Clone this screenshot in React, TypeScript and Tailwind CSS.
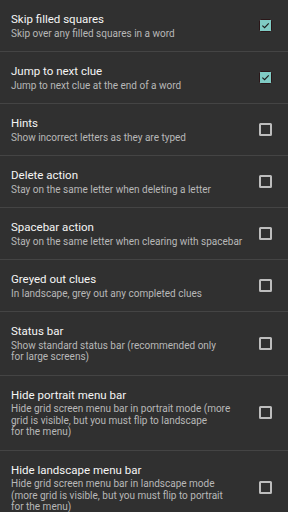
import React from 'react';

type Pref = {
    title: string;
    summary: string[];
    checked: boolean;
};

const PREFS: Pref[] = [
    { title: 'Skip filled squares', summary: ['Skip over any filled squares in a word'], checked: true },
    { title: 'Jump to next clue', summary: ['Jump to next clue at the end of a word'], checked: true },
    { title: 'Hints', summary: ['Show incorrect letters as they are typed'], checked: false },
    { title: 'Delete action', summary: ['Stay on the same letter when deleting a letter'], checked: false },
    { title: 'Spacebar action', summary: ['Stay on the same letter when clearing with spacebar'], checked: false },
    { title: 'Greyed out clues', summary: ['In landscape, grey out any completed clues'], checked: false },
    {
        title: 'Status bar',
        summary: ['Show standard status bar (recommended only', 'for large screens)'],
        checked: false,
    },
    {
        title: 'Hide portrait menu bar',
        summary: [
            'Hide grid screen menu bar in portrait mode (more',
            'grid is visible, but you must flip to landscape',
            'for the menu)',
        ],
        checked: false,
    },
    {
        title: 'Hide landscape menu bar',
        summary: [
            'Hide grid screen menu bar in landscape mode',
            '(more grid is visible, but you must flip to portrait',
            'for the menu)',
        ],
        checked: false,
    },
];

const CheckBox: React.FC<{ checked: boolean }> = ({ checked }) => {
    if (checked) {
        return (
            <div className="w-[13px] h-[13px] rounded-[1.5px] bg-[#80cbc4] border border-[#2a1618] flex items-center justify-center shrink-0">
                <svg width="9" height="9" viewBox="0 0 10 10">
                    <path d="M1.5 5.2 L4 7.5 L8.6 2.6" fill="none" stroke="#1c1c1c" strokeWidth="1.3" />
                </svg>
            </div>
        );
    }
    return <div className="w-[13px] h-[13px] rounded-[1.5px] border-2 border-[#bdbdbd] shrink-0" />;
};

const App: React.FC = () => {
    return (
        <div className="w-[288px] h-[512px] overflow-hidden bg-[#303030] font-['Roboto',sans-serif]">
            {PREFS.map((p, i) => (
                <div key={p.title}>
                    {i > 0 && <div className="h-px bg-[#444444]" />}
                    <div className="flex items-center pl-[11px] pr-[16px] py-[12px]">
                        <div className="flex-1 min-w-0">
                            <div className="text-[11.5px] leading-[15.5px] text-[#f5f5f5]">{p.title}</div>
                            <div className="text-[10px] leading-[11.5px] text-[#b8b8b8] whitespace-nowrap">
                                {p.summary.map((line, j) => (
                                    <div key={j}>{line}</div>
                                ))}
                            </div>
                        </div>
                        <CheckBox checked={p.checked} />
                    </div>
                </div>
            ))}
        </div>
    );
};

export default App;
